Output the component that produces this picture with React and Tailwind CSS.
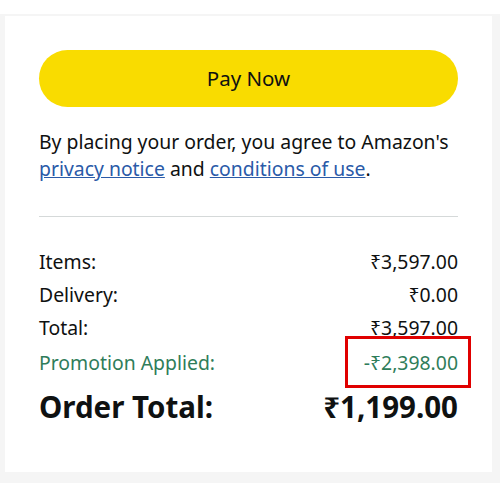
export default function App() {
  return (
    <div className="w-[500px] h-[500px] bg-white pt-[14px]" style={{ fontFamily: '"Noto Sans", "Open Sans", sans-serif' }}>
      <div className="h-[469px] bg-[#f5f5f5] pl-[5px] pr-[8px] pt-[2px] pb-[11px]">
        <div className="h-full bg-white px-[34px] pt-[34px] text-[#0f1111]">
          <button className="w-full h-[57px] rounded-full bg-[#f9dc00] text-[20.5px] text-[#0f1111] flex items-center justify-center">
            Pay Now
          </button>
          <p className="mt-[21px] text-[19.4px] leading-[27px] whitespace-nowrap">
            By placing your order, you agree to Amazon's
            <br />
            <span className="text-[#2a5aa8] underline">privacy notice</span> and{" "}
            <span className="text-[#2a5aa8] underline">conditions of use</span>.
          </p>
          <div className="mt-[34px] h-px bg-[#d5d9d9]" />
          <div className="mt-[28px] flex flex-col text-[19.4px]">
            <div className="flex justify-between h-[33px] items-center"><span>Items:</span><span>₹3,597.00</span></div>
            <div className="flex justify-between h-[33px] items-center"><span>Delivery:</span><span>₹0.00</span></div>
            <div className="flex justify-between h-[33px] items-center"><span>Total:</span><span>₹3,597.00</span></div>
            <div className="relative flex justify-between h-[38px] items-center text-[#2f7d5a]">
              <span>Promotion Applied:</span>
              <span>-₹2,398.00</span>
              <div className="absolute right-[-13px] top-[-8px] w-[126px] h-[52px] border-[3px] border-[#e00000]" />
            </div>
            <div className="flex justify-between h-[50px] items-center text-[29.5px] font-bold">
              <span>Order Total:</span><span>₹1,199.00</span>
            </div>
          </div>
        </div>
      </div>
    </div>
  );
}
